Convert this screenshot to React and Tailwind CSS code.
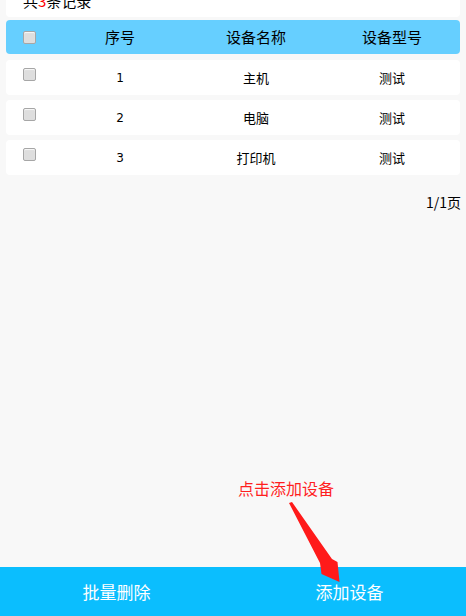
import { useState } from 'react';

const devices = [
  { id: 1, name: '主机', model: '测试' },
  { id: 2, name: '电脑', model: '测试' },
  { id: 3, name: '打印机', model: '测试' },
];

function Box({ checked, onClick }) {
  return (
    <span
      onClick={onClick}
      className={`block h-[13px] w-[13px] rounded-[2px] border border-[#a6a6a6] shadow-[inset_0_1px_1px_rgba(255,255,255,0.8)] ${checked ? 'bg-[#9ad8f5]' : 'bg-[#dedede]'}`}
    />
  );
}

export default function App() {
  const [picked, setPicked] = useState([]);
  const allPicked = picked.length === devices.length;

  const toggle = (id) => {
    setPicked(prev => (prev.includes(id) ? prev.filter(x => x !== id) : [...prev, id]));
  };

  return (
    <div
      className="relative flex min-h-[616px] flex-col bg-[#f8f8f8] text-black"
      style={{ fontFamily: '"Noto Sans CJK SC", "Liberation Sans", sans-serif' }}
    >
      <div className="px-[6px]">
        <div className="h-[17px] overflow-hidden rounded-b-[4px] bg-white pl-[17px]">
          <p className="mt-[-10px] text-[15px] leading-[22px]">
            共<span className="text-[#ff0000]">3</span>条记录
          </p>
        </div>

        <div className="mt-[3px] flex h-[34px] items-center rounded-[4px] bg-[#66cfff] text-[15px]">
          <div className="flex w-[46px] justify-center pl-[1px]">
            <Box checked={allPicked} onClick={() => setPicked(allPicked ? [] : devices.map(d => d.id))} />
          </div>
          <div className="flex-1 text-center">序号</div>
          <div className="flex-1 text-center">设备名称</div>
          <div className="flex-1 text-center">设备型号</div>
        </div>

        <ul className="mt-[6px] flex flex-col gap-[5px]">
          {devices.map(d => (
            <li key={d.id} className="flex h-[35px] items-center rounded-[4px] bg-white text-[13px]">
              <div className="flex h-full w-[46px] justify-center pl-[1px] pt-[8px]">
                <Box checked={picked.includes(d.id)} onClick={() => toggle(d.id)} />
              </div>
              <div className="flex-1 text-center text-[12px]" style={{ fontFamily: '"DejaVu Sans", sans-serif' }}>{d.id}</div>
              <div className="flex-1 text-center">{d.name}</div>
              <div className="flex-1 text-center">{d.model}</div>
            </li>
          ))}
        </ul>
      </div>

      <div className="mt-[17px] pr-[5px] text-right text-[14px] leading-[20px]">1/1页</div>

      <div className="flex-1" />

      <div className="flex h-[49px] items-center bg-[#0bbefe] text-[17px] text-white">
        <button className="flex-1 text-center">批量删除</button>
        <button className="flex-1 text-center">添加设备</button>
      </div>

      {/* annotation overlay */}
      <p className="absolute left-[238px] top-[477px] text-[16px] leading-[22px] text-[#ff1f1f]">点击添加设备</p>
      <svg className="pointer-events-none absolute left-0 top-0" width="466" height="616" viewBox="0 0 466 616">
        <polygon
          points="289,503 292,502 332,559 337.5,562 339.5,582 321.5,574 320,563"
          fill="#ff1a1a"
        />
      </svg>
    </div>
  );
}
